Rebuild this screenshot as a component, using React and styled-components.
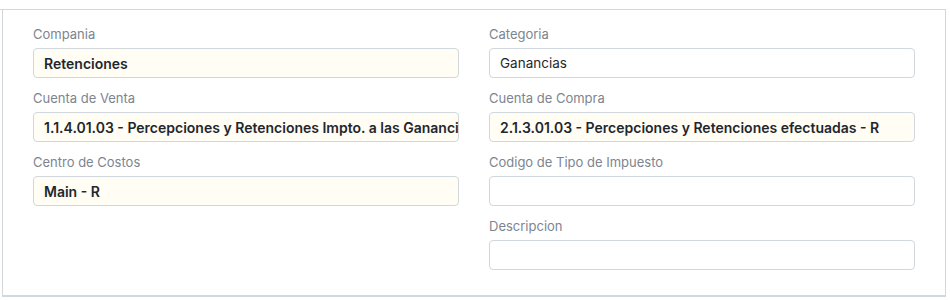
import React from "react";
import styled, { createGlobalStyle } from "styled-components";

const Global = createGlobalStyle`
  html, body { margin: 0; padding: 0; background: #fff; }
  body { font-family: Inter, "Noto Sans", sans-serif; -webkit-font-smoothing: antialiased; }
  * { box-sizing: border-box; }
`;

const Page = styled.div`
  margin-top: 9px;
  width: 946px;
  border-top: 1px solid #d1d8dd;
  padding-left: 2px;
`;

const Card = styled.section`
  border-left: 1px solid #d1d8dd;
  border-right: 1px solid #d1d8dd;
  border-bottom: 2px solid #d1d8dd;
  padding: 15px 30px 25px 30px;
  display: grid;
  grid-template-columns: minmax(0, 1fr) minmax(0, 1fr);
  column-gap: 30px;
  align-items: start;
`;

const Column = styled.div`
  display: flex;
  flex-direction: column;
  gap: 11px;
  min-width: 0;
`;

const Field = styled.div`
  display: flex;
  flex-direction: column;
`;

const Label = styled.label`
  font-size: 13px;
  line-height: 18px;
  color: #7c8590;
  margin-bottom: 5px;
`;

const Input = styled.div`
  height: 30px;
  border: 1px solid #d1d8dd;
  border-radius: 4px;
  background: ${(p) => (p.$filled ? "#fffdf4" : "#fff")};
  padding: 0 10px;
  display: flex;
  align-items: center;
  font-size: ${(p) => (p.$bold ? "14px" : "13.5px")};
  font-weight: ${(p) => (p.$bold ? 600 : 400)};
  color: #1f272e;
  white-space: nowrap;
  overflow: hidden;
`;

const left = [
  { label: "Compania", value: "Retenciones", bold: true, filled: true },
  { label: "Cuenta de Venta", value: "1.1.4.01.03 - Percepciones y Retenciones Impto. a las Ganancias - R", bold: true, filled: true },
  { label: "Centro de Costos", value: "Main - R", bold: true, filled: true },
];

const right = [
  { label: "Categoria", value: "Ganancias" },
  { label: "Cuenta de Compra", value: "2.1.3.01.03 - Percepciones y Retenciones efectuadas - R", bold: true, filled: true },
  { label: "Codigo de Tipo de Impuesto", value: "" },
  { label: "Descripcion", value: "" },
];

const renderFields = (items) =>
  items.map((f) => (
    <Field key={f.label}>
      <Label>{f.label}</Label>
      <Input $bold={f.bold} $filled={f.filled} title={f.value}>{f.value}</Input>
    </Field>
  ));

export default function App() {
  return (
    <>
      <Global />
      <Page>
        <Card>
          <Column>{renderFields(left)}</Column>
          <Column>{renderFields(right)}</Column>
        </Card>
      </Page>
    </>
  );
}
